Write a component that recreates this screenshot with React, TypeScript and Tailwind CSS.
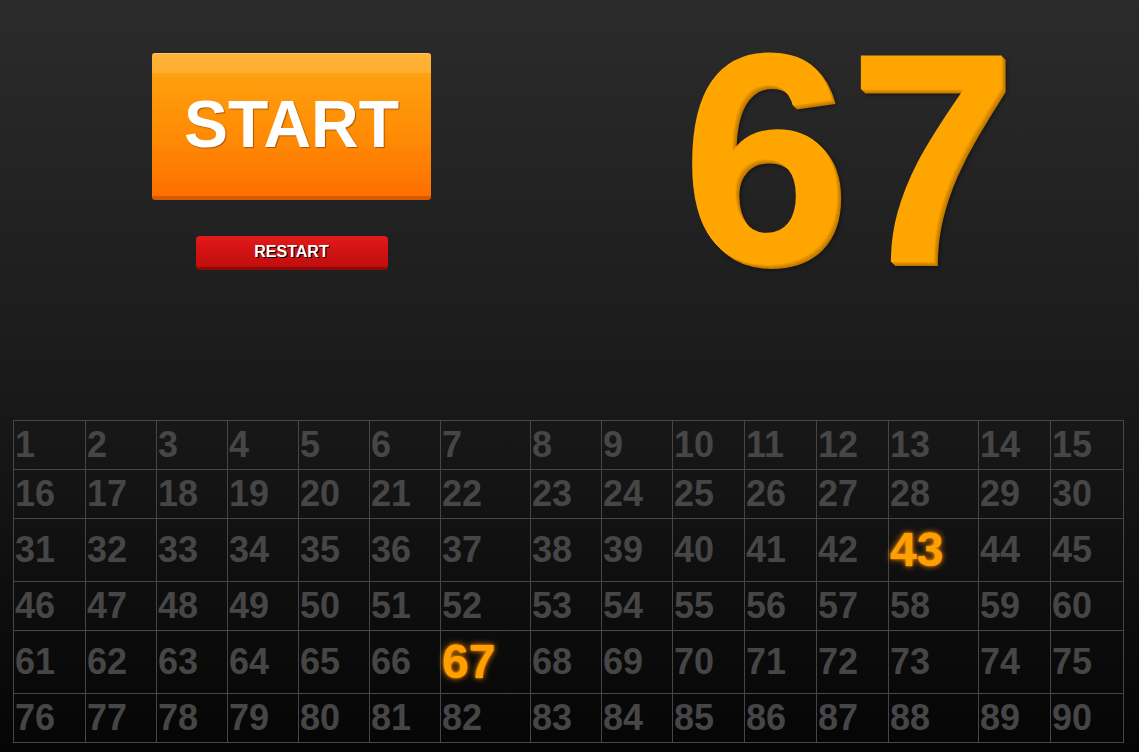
import React from 'react'

const colWidths = [72, 71, 71, 71, 71, 71, 90, 71, 71, 72, 72, 72, 90, 72, 73]
const rowHeights = [49, 49, 63, 49, 63, 49]
const drawn = [43, 67]

function NumberCell({ n }: { n: number }) {
  const hit = drawn.includes(n)
  return (
    <td className="border border-[#464646] p-0 pl-px align-middle">
      {hit ? (
        <span className="text-[48px] leading-none text-[#ffa000] [text-shadow:0_0_6px_#ff8c00,0_0_2px_#ff9a00]">{n}</span>
      ) : (
        <span className="text-[36px] leading-none text-[#464646]">{n}</span>
      )}
    </td>
  )
}

export default function App() {
  const rows = rowHeights.map((h, r) => ({ h, nums: colWidths.map((_, c) => r * 15 + c + 1) }))

  return (
    <div className="min-h-screen w-full bg-[linear-gradient(to_bottom,#2b2b2b_0%,#1c1c1c_45%,#050505_100%)] font-['Liberation_Sans',Arial,sans-serif] font-bold">
      <div className="flex h-[420px]">
        <div className="flex w-[583px] flex-col items-center pt-[53px]">
          <button
            type="button"
            className="flex h-[147px] w-[279px] items-center justify-center rounded-[3px] border-t border-b-4 border-t-[#ffc56a] border-b-[#d85a00] bg-[linear-gradient(to_bottom,#ffb43a_0%,#ffae2e_13%,#ffa00e_14%,#ff8a04_60%,#ff6f00_100%)] pb-[2px] text-[66px] text-white [text-shadow:1px_1px_1px_rgba(120,50,0,0.6)]"
          >
            START
          </button>
          <button
            type="button"
            className="mt-[36px] flex h-[34px] w-[192px] items-center justify-center rounded-[4px] border-b-[3px] border-b-[#8c0909] bg-[linear-gradient(to_bottom,#e31a1a_0%,#d21212_50%,#c10e0e_100%)] text-[16px] text-white [text-shadow:1px_1px_0_#000]"
          >
            RESTART
          </button>
        </div>
        <div className="w-[530px] pt-[8px] text-center">
          <span className="text-[300px] leading-none text-[#ffa500] [text-shadow:1px_1px_0_#eb9800,2px_2px_0_#dc8d00,3px_3px_0_#cc8200,4px_4px_0_#bd7800,5px_5px_4px_rgba(0,0,0,0.45)]">
            67
          </span>
        </div>
      </div>

      <div className="pl-[13px] pb-[10px]">
        <table className="border-collapse table-fixed w-[1110px]">
          <colgroup>
            {colWidths.map((w, i) => (
              <col key={i} style={{ width: w }} />
            ))}
          </colgroup>
          <tbody>
            {rows.map((row, r) => (
              <tr key={r} style={{ height: row.h }}>
                {row.nums.map((n) => (
                  <NumberCell key={n} n={n} />
                ))}
              </tr>
            ))}
          </tbody>
        </table>
      </div>
    </div>
  )
}
